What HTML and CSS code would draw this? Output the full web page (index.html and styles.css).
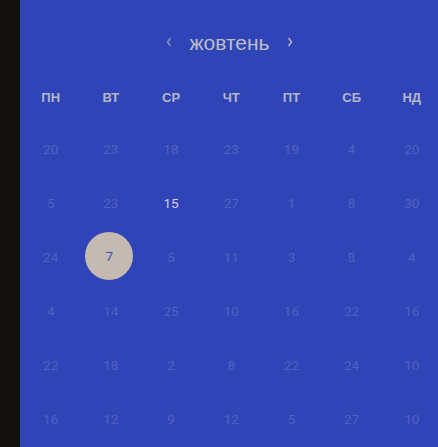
FILE: index.html
```html
<!DOCTYPE html>
<html lang="uk">
<head>
<meta charset="utf-8">
<link rel="stylesheet" href="styles.css">
</head>
<body>
<div class="app">
  <div class="header">
    <svg class="chev prev" width="8" height="12" viewBox="0 0 8 12"><path d="M5.5 2 L2.5 6 L5.5 10" fill="none" stroke="currentColor" stroke-width="1.5"/></svg>
    <span class="month">жовтень</span>
    <svg class="chev next" width="8" height="12" viewBox="0 0 8 12"><path d="M2.5 2 L5.5 6 L2.5 10" fill="none" stroke="currentColor" stroke-width="1.5"/></svg>
  </div>
  <div class="grid weekdays">
    <div>ПН</div><div>ВТ</div><div>СР</div><div>ЧТ</div><div>ПТ</div><div>СБ</div><div>НД</div>
  </div>
  <div class="grid days">
    <div>20</div><div>23</div><div>18</div><div>23</div><div>19</div><div>4</div><div>20</div>
    <div>5</div><div>23</div><div class="cur">15</div><div>27</div><div>1</div><div>8</div><div>30</div>
    <div>24</div><div class="sel"><span>7</span></div><div>5</div><div>11</div><div>3</div><div>8</div><div>4</div>
    <div>4</div><div>14</div><div>25</div><div>10</div><div>16</div><div>22</div><div>16</div>
    <div>22</div><div>18</div><div>2</div><div>8</div><div>22</div><div>24</div><div>10</div>
    <div>16</div><div>12</div><div>9</div><div>12</div><div>5</div><div>27</div><div>10</div>
  </div>
</div>
</body>
</html>
```
FILE: styles.css
```css
html, body {
  margin: 0;
  padding: 0;
  height: 100%;
}
body {
  background: #121110;
  display: flex;
  overflow: hidden;
  font-family: Roboto, "Liberation Sans", sans-serif;
}
.app {
  margin-left: 20px;
  flex: 1;
  height: 447px;
  background: #2f45b7;
  overflow: hidden;
}
.header {
  height: 86px;
  display: flex;
  align-items: center;
  justify-content: center;
  gap: 16px;
  padding-left: 1px;
}
.chev {
  margin-top: -3px;
}
.chev.prev {
  color: #8a90c8;
}
.chev.next {
  color: #b4b6cc;
}
.month {
  font-family: "Liberation Sans", Arial, sans-serif;
  font-size: 21px;
  color: #bdbcc6;
  line-height: 1;
  margin-top: -1px;
}
.grid {
  display: grid;
  grid-template-columns: repeat(7, 60.2px);
  margin-left: 0.6px;
  width: 422px;
}
.weekdays {
  height: 22px;
  margin-bottom: 14px;
}
.weekdays div {
  display: flex;
  align-items: center;
  justify-content: center;
  font-family: "Liberation Sans", Arial, sans-serif;
  font-weight: bold;
  font-size: 13px;
  color: #b4b5c8;
}
.days {
  grid-auto-rows: 54px;
}
.days div {
  display: flex;
  align-items: center;
  justify-content: center;
  font-size: 13.5px;
  color: #4f62c1;
}
.days .cur {
  color: #cfd0da;
}
.days .sel span {
  width: 48px;
  height: 48px;
  border-radius: 50%;
  background: #c5bab1;
  color: #3d55b5;
  display: flex;
  align-items: center;
  justify-content: center;
  margin-left: -3px;
  margin-bottom: 2px;
}
```
